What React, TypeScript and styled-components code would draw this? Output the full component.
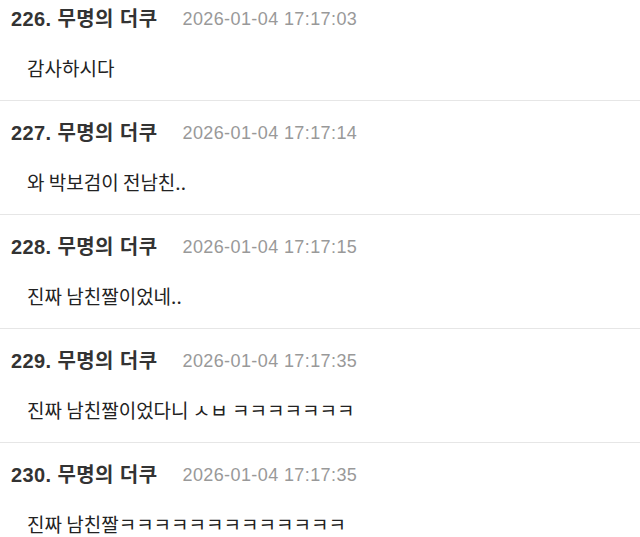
import styled, { createGlobalStyle } from "styled-components";

const GlobalStyle = createGlobalStyle`
  html, body {
    margin: 0;
    padding: 0;
    background: #ffffff;
  }
  body {
    font-family: "Liberation Sans", "Noto Sans CJK KR", sans-serif;
    -webkit-font-smoothing: antialiased;
  }
`;

const Page = styled.div`
  width: 640px;
  height: 537px;
  overflow: hidden;
  background: #ffffff;
`;

const List = styled.ul`
  list-style: none;
  margin: -13px 0 0;
  padding: 0;
`;

const Item = styled.li`
  padding: 20px 11px 20px;
  border-bottom: 1px solid #e6e6e6;
`;

const Header = styled.div`
  display: flex;
  align-items: center;
  height: 24px;
  line-height: 24px;
`;

const Writer = styled.span`
  font-family: "Liberation Sans", "Noto Sans CJK KR", sans-serif;
  font-size: 20px;
  font-weight: 700;
  letter-spacing: 0.4px;
  color: #333333;
`;

const Date = styled.span`
  margin-left: 25px;
  font-family: "Liberation Sans", "Noto Sans CJK KR", sans-serif;
  font-size: 18px;
  letter-spacing: 0.4px;
  color: #999999;
`;

const Body = styled.p`
  margin: 25px 0 0 16px;
  height: 24px;
  line-height: 24px;
  font-family: "Noto Sans CJK KR", sans-serif;
  font-size: 19px;
  color: #222222;
  white-space: nowrap;
`;

type Comment = {
  no: number;
  name: string;
  date: string;
  text: string;
};

const comments: Comment[] = [
  { no: 226, name: "무명의 더쿠", date: "2026-01-04 17:17:03", text: "감사하시다" },
  { no: 227, name: "무명의 더쿠", date: "2026-01-04 17:17:14", text: "와 박보검이 전남친.." },
  { no: 228, name: "무명의 더쿠", date: "2026-01-04 17:17:15", text: "진짜 남친짤이었네.." },
  { no: 229, name: "무명의 더쿠", date: "2026-01-04 17:17:35", text: "진짜 남친짤이었다니 ㅅㅂ ㅋㅋㅋㅋㅋㅋㅋ" },
  { no: 230, name: "무명의 더쿠", date: "2026-01-04 17:17:35", text: "진짜 남친짤ㅋㅋㅋㅋㅋㅋㅋㅋㅋㅋㅋㅋㅋ" },
];

export default function App() {
  return (
    <>
      <GlobalStyle />
      <Page>
        <List>
          {comments.map((c) => (
            <Item key={c.no}>
              <Header>
                <Writer>
                  {c.no}. {c.name}
                </Writer>
                <Date>{c.date}</Date>
              </Header>
              <Body>{c.text}</Body>
            </Item>
          ))}
        </List>
      </Page>
    </>
  );
}
